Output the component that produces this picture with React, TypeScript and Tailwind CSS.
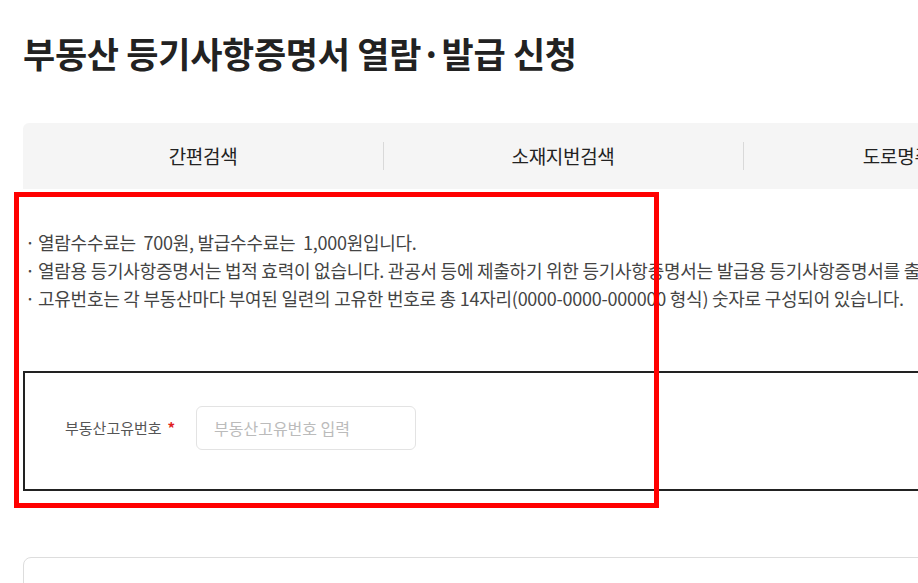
import React from "react";

const tabs = ["간편검색", "소재지번검색", "도로명주소검색", "고유번호검색"];

const notices = [
  "열람수수료는  700원, 발급수수료는  1,000원입니다.",
  "열람용 등기사항증명서는 법적 효력이 없습니다. 관공서 등에 제출하기 위한 등기사항증명서는 발급용 등기사항증명서를 출력하시기 바랍니다.",
  "고유번호는 각 부동산마다 부여된 일련의 고유한 번호로 총 14자리(0000-0000-000000 형식) 숫자로 구성되어 있습니다.",
];

export default function App() {
  return (
    <div
      className="relative w-full h-[583px] overflow-hidden bg-white"
      style={{ fontFamily: '"Noto Sans CJK KR", "Noto Sans", sans-serif' }}
    >
      <div className="w-[1500px] pl-[23px]">
        {/* Title */}
        <h1 className="pt-[29px] text-[35px] leading-[48px] font-bold text-[#222] tracking-[-0.3px]">
          부동산 등기사항증명서 열람·발급 신청
        </h1>

        {/* Tabs */}
        <div className="mt-[46px] flex h-[66px] items-center rounded-t-[6px] bg-[#f5f5f5]">
          {tabs.map((tab, i) => (
            <div key={tab} className="relative flex w-[360px] items-center justify-center">
              {i > 0 && <span className="absolute left-0 top-1/2 h-[28px] w-px -translate-y-1/2 bg-[#d9d9d9]" />}
              <span className="text-[19px] text-[#222] tracking-[-0.3px]">{tab}</span>
            </div>
          ))}
        </div>

        {/* Notices */}
        <ul className="mt-[39px] whitespace-pre text-[18px] leading-[28px] text-[#444] tracking-[-0.25px]">
          {notices.map((n) => (
            <li key={n} className="flex">
              <span className="w-[15px] pl-[2px]">·</span>
              <span>{n}</span>
            </li>
          ))}
        </ul>

        {/* Input box */}
        <div className="mt-[59px] h-[120px] border-2 border-[#222] pl-[40px] pt-[33px]">
          <div className="flex items-center">
            <label className="flex w-[131px] items-center gap-[6px] text-[15px] text-[#555]">
              부동산고유번호
              <span className="font-bold text-[#e02020]">*</span>
            </label>
            <input
              type="text"
              placeholder="부동산고유번호 입력"
              className="h-[44px] w-[220px] rounded-[6px] border border-[#e3e3e3] px-[17px] text-[16px] text-[#333] placeholder:text-[#bbb] focus:outline-none"
            />
          </div>
        </div>

        {/* Result area */}
        <div className="mt-[66px] h-[80px] rounded-tl-[8px] border border-[#dddddd]" />
      </div>

      {/* Highlight overlay */}
      <div className="pointer-events-none absolute left-[14px] top-[192px] h-[316px] w-[645px] border-[5px] border-[#ff0000]" />
    </div>
  );
}
